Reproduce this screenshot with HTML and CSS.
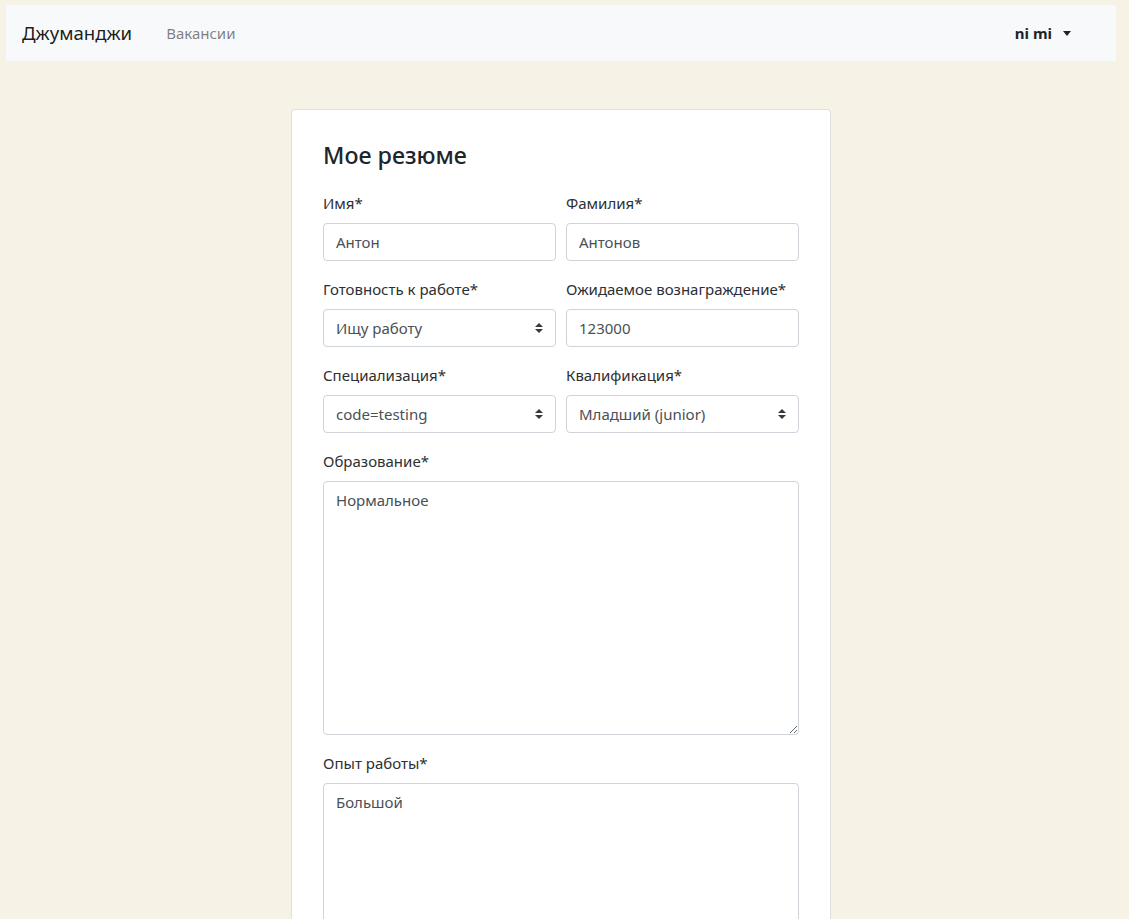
FILE: index.html
```html
<!DOCTYPE html>
<html lang="ru">
<head>
<meta charset="utf-8">
<title>Мое резюме</title>
<link rel="stylesheet" href="styles.css">
</head>
<body>
<div class="page">
  <nav class="navbar">
    <a class="brand" href="#">Джуманджи</a>
    <a class="nav-link" href="#">Вакансии</a>
    <div class="spacer"></div>
    <a class="user" href="#">ni mi<span class="caret"></span></a>
  </nav>

  <main class="main">
    <div class="card">
      <h1 class="card-title">Мое резюме</h1>
      <form class="form">
        <div class="row">
          <div class="group">
            <label class="label">Имя*</label>
            <input class="control" type="text" value="Антон">
          </div>
          <div class="group">
            <label class="label">Фамилия*</label>
            <input class="control" type="text" value="Антонов">
          </div>
        </div>
        <div class="row">
          <div class="group">
            <label class="label">Готовность к работе*</label>
            <div class="select-wrap">
              <select class="control select"><option>Ищу работу</option></select>
              <svg class="select-icon" viewBox="0 0 4 5" width="8" height="10"><path d="M2 0L0 2h4zm0 5L0 3h4z" fill="#343a40"/></svg>
            </div>
          </div>
          <div class="group">
            <label class="label">Ожидаемое вознаграждение*</label>
            <input class="control" type="text" value="123000">
          </div>
        </div>
        <div class="row">
          <div class="group">
            <label class="label">Специализация*</label>
            <div class="select-wrap">
              <select class="control select"><option>code=testing</option></select>
              <svg class="select-icon" viewBox="0 0 4 5" width="8" height="10"><path d="M2 0L0 2h4zm0 5L0 3h4z" fill="#343a40"/></svg>
            </div>
          </div>
          <div class="group">
            <label class="label">Квалификация*</label>
            <div class="select-wrap">
              <select class="control select"><option>Младший (junior)</option></select>
              <svg class="select-icon" viewBox="0 0 4 5" width="8" height="10"><path d="M2 0L0 2h4zm0 5L0 3h4z" fill="#343a40"/></svg>
            </div>
          </div>
        </div>
        <div class="group full">
          <label class="label">Образование*</label>
          <textarea class="control area">Нормальное</textarea>
        </div>
        <div class="group full">
          <label class="label">Опыт работы*</label>
          <textarea class="control area">Большой</textarea>
        </div>
      </form>
    </div>
  </main>
</div>
</body>
</html>
```

FILE: styles.css
```css
* { box-sizing: border-box; }
html, body { margin: 0; padding: 0; }
body {
  background: #f6f2e6;
  font-family: "Noto Sans", "Open Sans", sans-serif;
  font-size: 16px;
  line-height: 1.5;
  color: #212529;
}
.page {
  width: 1110px;
  margin: 5px 0 0 6px;
}
.navbar {
  display: flex;
  align-items: center;
  height: 56px;
  padding: 8px 44px 8px 16px;
  background: #f8f9fa;
}
.brand {
  font-size: 18.6px;
  color: rgba(0,0,0,.9);
  text-decoration: none;
  margin-right: 34px;
}
.nav-link {
  color: rgba(0,0,0,.5);
  text-decoration: none;
  font-size: 15px;
}
.spacer { flex: 1; }
.user {
  display: flex;
  align-items: center;
  color: #212529;
  font-weight: 700;
  text-decoration: none;
  font-size: 15px;
  margin-right: 1px;
}
.caret {
  display: inline-block;
  margin-left: 11px;
  width: 0; height: 0;
  border-top: 5px solid #212529;
  border-left: 4.5px solid transparent;
  border-right: 4.5px solid transparent;
}
.main {
  display: flex;
  justify-content: center;
  padding-top: 48px;
}
.card {
  width: 540px;
  background: #fff;
  border: 1px solid rgba(0,0,0,.125);
  border-radius: 4px;
  padding: 31px;
}
.card-title {
  margin: 0 0 22px;
  font-size: 23.3px;
  font-weight: 500;
  line-height: 28px;
}
.row {
  display: flex;
  gap: 10px;
}
.group {
  flex: 1;
  display: flex;
  flex-direction: column;
  margin-bottom: 16px;
  min-width: 0;
}
.label {
  font-size: 15px;
  line-height: 24px;
  margin-bottom: 8px;
  color: #2c3034;
}
.control {
  display: block;
  width: 100%;
  height: 38px;
  padding: 6px 12px;
  font: inherit;
  font-size: 15px;
  line-height: 24px;
  color: #495057;
  background: #fff;
  border: 1px solid #ced4da;
  border-radius: 4px;
  margin: 0;
}
.select-wrap { position: relative; }
.select {
  appearance: none;
  -webkit-appearance: none;
  padding-right: 28px;
}
.select-icon {
  position: absolute;
  right: 13px;
  top: 14px;
  pointer-events: none;
}
.area {
  height: 254px;
  resize: vertical;
}
```
